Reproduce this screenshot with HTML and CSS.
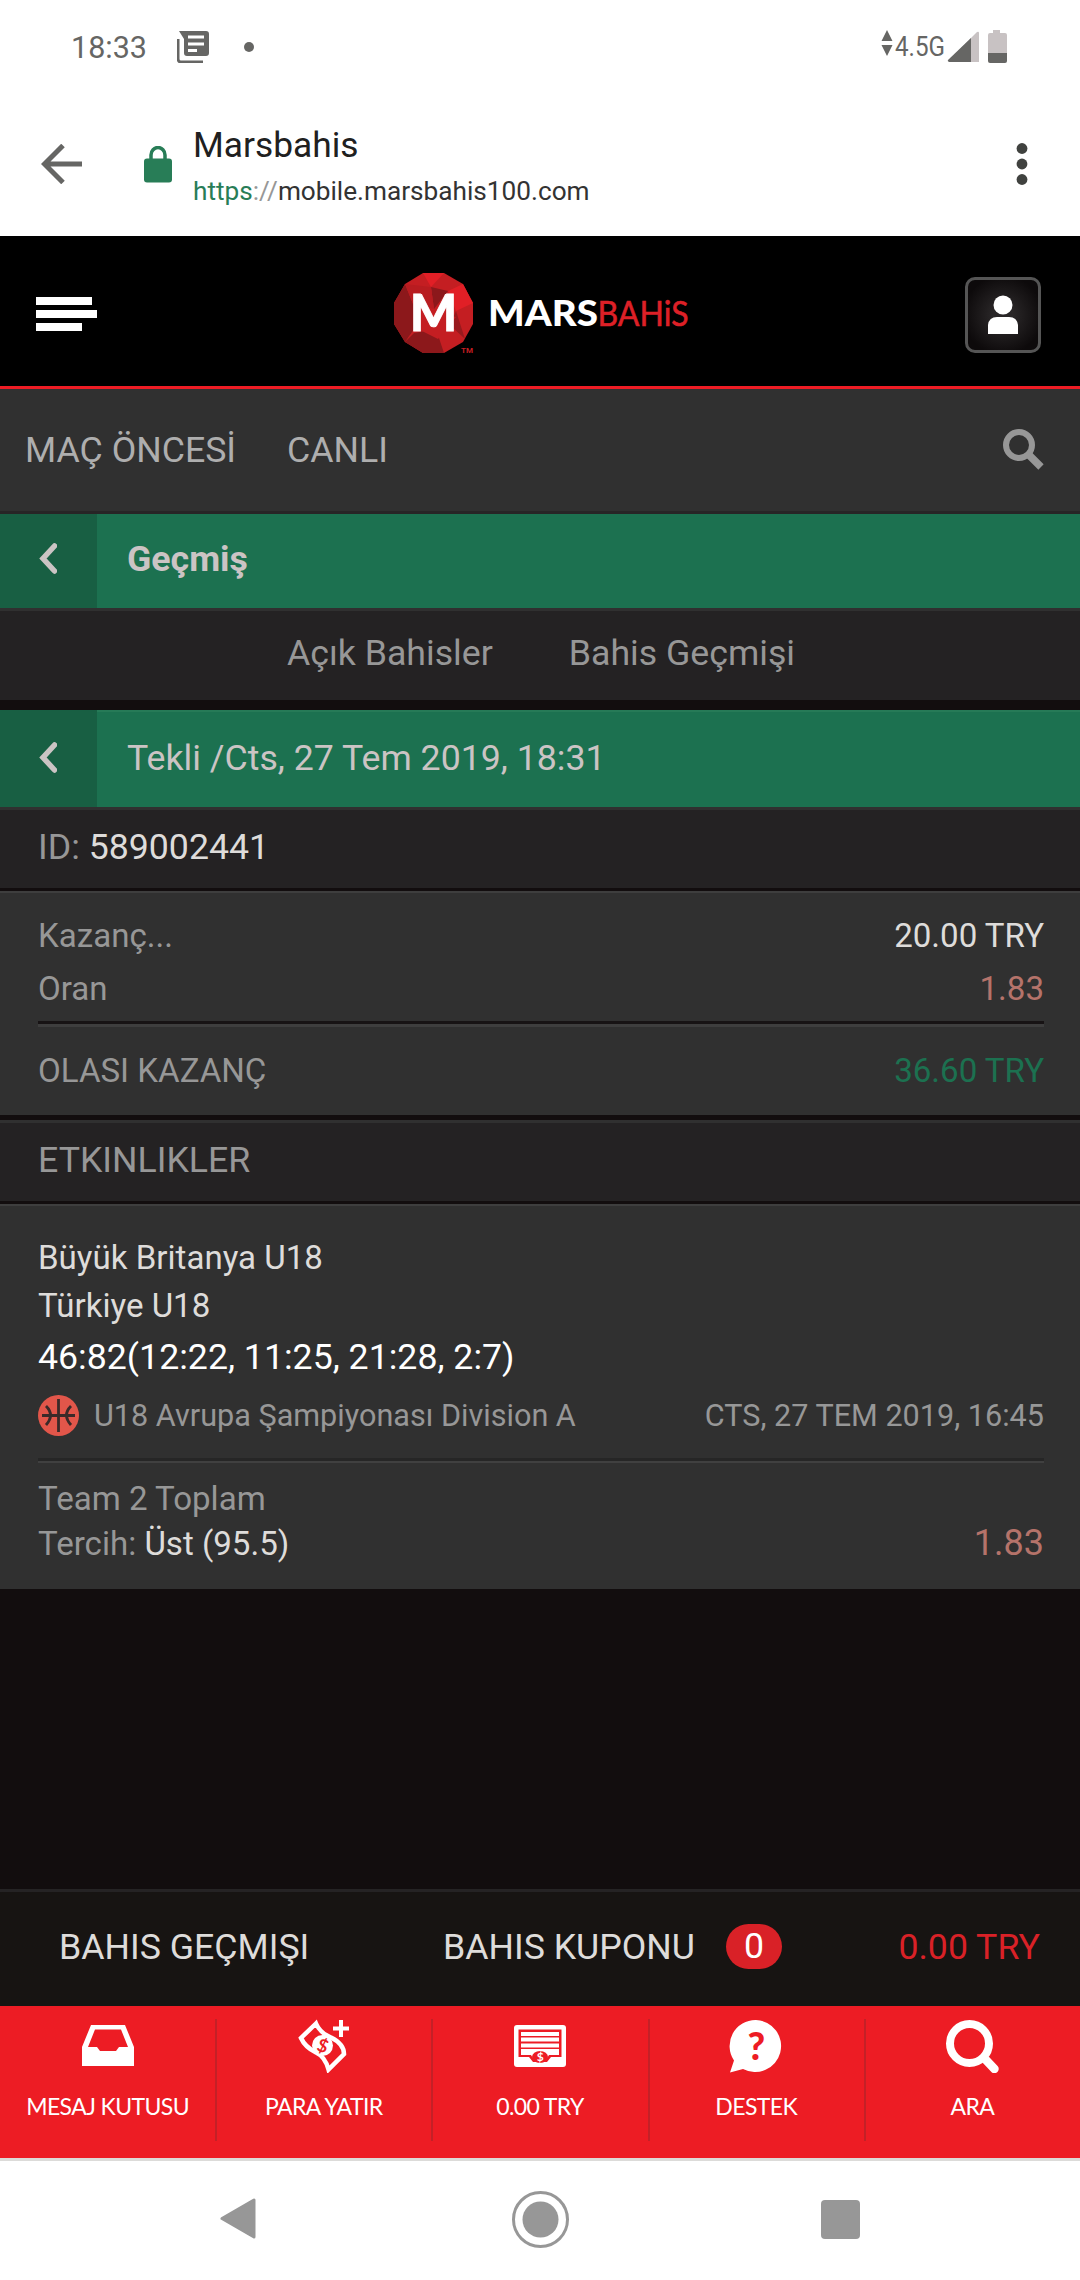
FILE: index.html
```html
<!DOCTYPE html>
<html lang="tr">
<head>
  <meta charset="UTF-8" />
  <meta name="viewport" content="width=device-width, initial-scale=1.0" />
  <title>Marsbahis</title>
  <link rel="stylesheet" href="styles.css">
</head>
<body>
  <div class="status-bar">
    <span class="clock">18:33</span>
    <svg class="news" width="32" height="32" viewBox="0 0 32 32">
      <path d="M1 8v20a3 3 0 0 0 3 3h22" fill="none" stroke="#666664" stroke-width="3"/>
      <path d="M2 0h27a3 3 0 0 1 3 3v19a3 3 0 0 1-3 3H10a3 3 0 0 1-3-3V8z" fill="#666664"/>
      <path d="M11 6h16M11 13h16M11 19.500h9" stroke="#fff" stroke-width="3"/>
    </svg>
    <span class="dot"></span>
    <svg class="signal" width="126" height="34" viewBox="0 0 126 34">
      <path d="M6 0l5.500 11H.5zM.5 15h11L6 26z" fill="#666664"/>
      <text x="14" y="25.500" font-size="27.500" textLength="50" lengthAdjust="spacingAndGlyphs" fill="#666664">4.5G</text>
      <path d="M68 32V30L96 2q2-1 2 1v29z" fill="#c8c2c3"/>
      <path d="M67 30L90 8v24H68q-2-1-1-2z" fill="#666664"/>
      <path d="M112 0h7v3h5q2 0 2 2v18h-19V5q0-2 2-2h3z" fill="#c8c2c3"/>
      <path d="M107 23h19v8q0 2-2 2h-15q-2 0-2-2z" fill="#666664"/>
    </svg>
  </div>

  <div class="browser-bar">
    <svg class="back" width="42" height="40" viewBox="0 0 42 40">
      <path d="M22 1.500L3.500 20 22 38.500M3 20h38" fill="none" stroke="#666664" stroke-width="5"/>
    </svg>
    <svg class="lock" width="28" height="37" viewBox="0 0 28 37">
      <path d="M7 14V9a7 7.500 0 0 1 14 0v5" fill="none" stroke="#287d57" stroke-width="3.500"/>
      <rect y="12.500" width="28" height="24" rx="3" fill="#287d57"/>
    </svg>
    <div class="address">
      <div class="page-title">Marsbahis</div>
      <div class="url"><span class="scheme">https</span><span class="slashes">://</span>mobile.marsbahis100.com</div>
    </div>
    <svg width="12" height="42" viewBox="0 0 12 42" fill="#40423f">
      <circle cx="6" cy="5.500" r="5.400"/><circle cx="6" cy="21" r="5.400"/><circle cx="6" cy="36.500" r="5.400"/>
    </svg>
  </div>

  <header class="site-header">
    <div class="burger"><i></i><i></i><i></i></div>
    <svg class="logo" width="304" height="82" viewBox="0 0 304 82">
      <path d="M29 0h21l19 11 10 19v21L69 69 50 80H29L11 69 0 51V30L11 11z" fill="#c41e22"/>
      <path d="M29 0h21L37 14z" fill="#e11f26"/>
      <path d="M69 11l10 19-17 8-8-20z" fill="#e11f26"/>
      <path d="M0 30L11 11l8 20 1 25-9 13L0 51z" fill="#8c181b"/>
      <path d="M37 14l17 4-14 18z" fill="#8c181b"/>
      <path d="M11 69l9-9 22-4 8 24H29z" fill="#8c181b"/>
      <path d="M11 11l26 3L40 36 19 31z" fill="#b81c20"/>
      <path d="M62 38l9 28-15-14z" fill="#981a1e"/>
      <path d="M28 58l16-18 18 4-18 22z" fill="#c41e22"/>
      <text class="mark" x="16" y="58" font-size="51" textLength="47" lengthAdjust="spacingAndGlyphs" fill="#fff" stroke="#fff">M</text>
      <text x="67" y="80" font-size="8" font-weight="700" textLength="12" lengthAdjust="spacingAndGlyphs" fill="#c41e22">TM</text>
      <text class="word bold" x="94" y="53" font-size="35.500" textLength="110" lengthAdjust="spacingAndGlyphs" fill="#fff">MARS</text>
      <text class="word" x="203.500" y="53" font-size="35.500" textLength="91" lengthAdjust="spacingAndGlyphs" fill="#dd2027" stroke="#dd2027" stroke-width=".6">BAHiS</text>
    </svg>
    <div class="user-btn">
      <svg width="32" height="40" viewBox="0 0 32 40" fill="#fff">
        <circle cx="16" cy="10" r="9.500"/>
        <path d="M1 39V30q1-8 9-8h12q8 0 9 8v9z"/>
      </svg>
    </div>
  </header>

  <nav class="tabs">
    <a>MAÇ ÖNCESİ</a>
    <a>CANLI</a>
    <svg width="42" height="42" viewBox="0 0 42 42" fill="none" stroke="#979797">
      <circle cx="17" cy="17" r="13" stroke-width="6"/>
      <path d="M26.500 26.500L39 39" stroke-width="7.500"/>
    </svg>
  </nav>

  <div class="title-bar">
    <div class="title-back"><svg width="18" height="31" viewBox="0 0 18 31"><path d="M15.500 3L4 15.500 15.500 28"/></svg></div>
    <div class="title-text strong">Geçmiş</div>
  </div>
  <div class="sub-tabs">
    <a>Açık Bahisler</a>
    <a>Bahis Geçmişi</a>
  </div>

  <div class="title-bar coupon">
    <div class="title-back"><svg width="18" height="31" viewBox="0 0 18 31"><path d="M15.500 3L4 15.500 15.500 28"/></svg></div>
    <div class="title-text">Tekli /Cts, 27 Tem 2019, 18:31</div>
  </div>
  <div class="coupon-id">ID:&nbsp;<b>589002441</b></div>

  <section class="summary">
    <div class="row"><span>Kazanç...</span><span class="light">20.00 TRY</span></div>
    <div class="row"><span>Oran</span><span class="odd">1.83</span></div>
    <div class="rule"></div>
    <div class="row total"><span>OLASI KAZANÇ</span><span class="win">36.60 TRY</span></div>
  </section>

  <div class="section-head">ETKINLIKLER</div>

  <section class="event">
    <div class="team">Büyük Britanya U18</div>
    <div class="team">Türkiye U18</div>
    <div class="score">46:82(12:22, 11:25, 21:28, 2:7)</div>
    <div class="league">
      <svg width="41" height="41" viewBox="0 0 41 41">
        <circle cx="20.500" cy="20.500" r="20.500" fill="#e2564a"/>
        <path d="M20.500 4v33M4 20.500h33M8 11q9 9 0 19M33 11q-9 9 0 19" fill="none" stroke="#3a2a29" stroke-width="2.800"/>
      </svg>
      <span class="league-name">U18 Avrupa Şampiyonası Division A</span>
      <span>CTS, 27 TEM 2019, 16:45</span>
    </div>
    <div class="rule soft"></div>
    <div class="pick">
      <div>
        <div class="pick-line">Team 2 Toplam</div>
        <div class="pick-line">Tercih: <span class="light">Üst (95.5)</span></div>
      </div>
      <span class="odd big">1.83</span>
    </div>
  </section>

  <div class="betslip">
    <span class="slip-history">BAHIS GEÇMIŞI</span>
    <span>BAHIS KUPONU</span>
    <span class="badge">0</span>
    <span class="balance">0.00 TRY</span>
  </div>

  <nav class="bottom-nav">
    <a>
      <svg width="54" height="54" viewBox="0 0 54 54">
        <path d="M10 6h34l9 22v19H1V28zM14 10.500L7 28h9l3 4h16l3-4h9l-7-17.500z" fill="#fff" fill-rule="evenodd"/>
      </svg>
      <span>MESAJ KUTUSU</span>
    </a>
    <a>
      <svg width="54" height="54" viewBox="0 0 54 54" fill="none" stroke="#fff">
        <path d="M19 4.500L4 19q4 9 15 14.500 9 4 12.500 17L47 35q0-10-13-16.500Q23 14 19 4.500z" stroke-width="4.500"/>
        <circle cx="25.500" cy="26.500" r="10.500" fill="#fff" stroke="none"/>
        <text x="25.500" y="33" font-size="18" font-weight="700" text-anchor="middle" fill="#ed1c24" stroke="none" transform="rotate(20 25.500 26.500)">$</text>
        <path d="M44 1v17M36 9.500h16" stroke-width="4"/>
      </svg>
      <span>PARA YATIR</span>
    </a>
    <a>
      <svg width="54" height="54" viewBox="0 0 54 54">
        <rect x="1" y="6" width="52" height="42" rx="3" fill="#fff"/>
        <path d="M5.500 10.500h43V38H38l-4 5H20l-4-5H5.500z" fill="#ed1c24"/>
        <path d="M8 15h38M8 20.500h38M8 26.500h38" stroke="#fff" stroke-width="4"/>
        <path d="M8 30h38v6H36l-3 5H21l-3-5H8z" fill="#fff"/>
        <ellipse cx="27" cy="38" rx="8" ry="6" fill="#ed1c24"/>
        <text x="27" y="42" font-size="12" font-weight="700" text-anchor="middle" fill="#fff">$</text>
      </svg>
      <span>0.00 TRY</span>
    </a>
    <a>
      <svg width="54" height="54" viewBox="0 0 54 54">
        <path d="M27 1a26 26 0 1 1-13 49L1 53.500l4-12A26 26 0 0 1 27 1z" fill="#fff"/>
        <text class="word bold" x="27" y="40.500" font-size="38" text-anchor="middle" fill="#ed1c24">?</text>
      </svg>
      <span>DESTEK</span>
    </a>
    <a>
      <svg width="54" height="54" viewBox="0 0 54 54" fill="none" stroke="#fff">
        <circle cx="24.500" cy="24.500" r="19.500" stroke-width="8"/>
        <path d="M41 41l8.500 9" stroke-width="8.500" stroke-linecap="round"/>
      </svg>
      <span>ARA</span>
    </a>
  </nav>

  <div class="android-nav">
    <svg width="40" height="42" viewBox="0 0 40 42"><path d="M35 2v37L3 20.500z" fill="#979797" stroke="#979797" stroke-width="3" stroke-linejoin="round"/></svg>
    <svg width="57" height="57" viewBox="0 0 57 57"><circle cx="28.500" cy="28.500" r="27" fill="none" stroke="#979797" stroke-width="3"/><circle cx="28.500" cy="28.500" r="18" fill="#979797"/></svg>
    <div class="recent"></div>
  </div>
</body>
</html>
```
FILE: styles.css
```css
* {
  box-sizing: border-box;
}
body {
  margin: 0;
  width: 1080px;
  height: 2280px;
  display: flex;
  flex-direction: column;
  font-family: Roboto, "Noto Sans", sans-serif;
  font-size: 35.7px;
  background: #120d0e;
  color: #979797;
}
svg {
  display: block;
  flex: none;
}

/* phone status bar */
.status-bar {
  height: 94px;
  padding: 0 73px 0 71px;
  display: flex;
  align-items: center;
  background: #fff;
  color: #666664;
  font-size: 30.5px;
}
.news {
  margin-left: 30px;
}
.dot {
  width: 10px;
  height: 10px;
  margin-left: 35px;
  border-radius: 50%;
  background: #666664;
}
.signal {
  margin-left: auto;
}

/* browser toolbar */
.browser-bar {
  height: 142px;
  padding: 0 52px 2px 41px;
  display: flex;
  align-items: center;
  background: #fff;
}
.lock {
  margin-left: 61px;
}
.address {
  flex: 1;
  margin-left: 21px;
  padding-top: 8px;
}
.page-title {
  font-size: 35.3px;
  line-height: 47px;
  color: #202020;
}
.url {
  font-size: 26.2px;
  line-height: 45px;
  color: #333;
}
.scheme {
  color: #287d57;
}
.slashes {
  color: #979797;
}

/* site header */
.site-header {
  height: 153px;
  padding: 5px 39px 0 36px;
  display: flex;
  align-items: center;
  justify-content: space-between;
  background: #000;
  border-bottom: 3px solid #ed1c24;
}
.burger {
  width: 76px;
  display: flex;
  flex-direction: column;
  gap: 5px;
}
.burger i {
  width: 56px;
  height: 8px;
  background: #fff;
}
.burger i:nth-child(2) {
  width: 61px;
}
.burger i:nth-child(3) {
  width: 46px;
}
.logo {
  margin-left: 15px;
}
.mark {
  font-family: Lato, sans-serif;
  font-weight: 900;
}
.word {
  font-family: Lato, sans-serif;
}
.word.bold {
  font-weight: 900;
}
.user-btn {
  width: 76px;
  height: 76px;
  margin-top: 3px;
  display: flex;
  align-items: center;
  justify-content: center;
  border: 3px solid #555;
  border-radius: 10px;
  background: radial-gradient(#292627 20%, #0d0a0b 80%);
}

.tabs {
  height: 125px;
  padding: 0 36px 4px 25px;
  display: flex;
  align-items: center;
  gap: 51px;
  background: #303030;
  box-shadow: inset 0 -3px #272526;
  color: #aeaeae;
}
.tabs svg {
  margin-left: auto;
  margin-bottom: 1px;
}

/* green headings */
.title-bar {
  height: 94px;
  display: flex;
  background: #1c7150;
  color: #cbc4c4;
}
.title-back {
  width: 97px;
  padding: 0 0 5px 39px;
  display: flex;
  align-items: center;
  background: #185f43;
}
.title-back path {
  fill: none;
  stroke: #cbc4c4;
  stroke-width: 5.5;
  stroke-linecap: round;
}
.title-text {
  padding: 0 0 5px 30px;
  display: flex;
  align-items: center;
}
.strong {
  font-weight: 700;
}
.coupon {
  height: 97px;
  margin-top: 10px;
  box-shadow: inset 0 2px #267a57;
}
.coupon .title-back {
  padding-bottom: 3px;
}
.coupon .title-text {
  padding-bottom: 1px;
}

.sub-tabs {
  height: 92px;
  padding: 0 0 5px 2px;
  display: flex;
  align-items: center;
  justify-content: center;
  gap: 76px;
  background: #242223;
  border-top: 3px solid #303030;
}
.coupon-id {
  height: 81px;
  padding: 0 0 5px 38px;
  display: flex;
  align-items: center;
  background: #242223;
  border-top: 3px solid #303030;
}
.coupon-id b {
  font-weight: 400;
  color: #dedcda;
}

.summary {
  height: 227px;
  padding: 18px 36px 0 38px;
  background: #303030;
  border-top: 3px solid #120d0e;
  box-shadow: inset 0 2px #3e3e3e;
  font-size: 33.1px;
}
.row {
  height: 53px;
  display: flex;
  align-items: center;
  justify-content: space-between;
}
.total {
  height: 86px;
}
.rule {
  height: 6px;
  margin-top: 6px;
  background: #171314;
  border-bottom: 3px solid #3e3e3e;
}
.light {
  color: #dedcda;
}
.odd {
  color: #b5736a;
}
.win {
  color: #1c7150;
}

.section-head {
  height: 84px;
  margin-top: 5px;
  padding: 0 0 5px 38px;
  display: flex;
  align-items: center;
  background: #242223;
  border-top: 3px solid #303030;
  border-bottom: 3px solid #120d0e;
}

/* event card */
.event {
  height: 385px;
  padding: 30px 36px 0 38px;
  background: #303030;
  box-shadow: inset 0 2px #3e3e3e;
  font-size: 33.1px;
}
.team {
  line-height: 48px;
  color: #dedcda;
}
.score {
  font-size: 35.7px;
  line-height: 54px;
  color: #fff;
}
.league {
  height: 63px;
  display: flex;
  align-items: center;
  font-size: 30.6px;
}
.league-name {
  flex: 1;
  margin-left: 15px;
}
.soft {
  height: 5px;
  margin-top: 11px;
  background: #262626;
  border-bottom: 2px solid #404040;
}
.pick {
  padding-top: 13px;
  display: flex;
  align-items: flex-end;
  justify-content: space-between;
}
.pick-line,
.big {
  line-height: 45px;
}
.big {
  font-size: 36px;
}

.betslip {
  height: 117px;
  margin-top: auto;
  padding: 0 40px 5px 59px;
  display: flex;
  align-items: center;
  background: #171412;
  border-top: 3px solid #252324;
  color: #dedcda;
}
.slip-history {
  width: 384px;
}
.badge {
  width: 56px;
  margin-left: 31px;
  border-radius: 23px;
  background: #d92127;
  color: #fff;
  line-height: 45px;
  text-align: center;
}
.balance {
  margin-left: auto;
  color: #d92127;
}

.bottom-nav {
  height: 152px;
  padding: 13px 0 17px;
  display: flex;
  background: #ed1c24;
}
.bottom-nav a {
  flex: 1;
  display: flex;
  flex-direction: column;
  align-items: center;
  gap: 18px;
  font-family: Lato, sans-serif;
  font-size: 23px;
  letter-spacing: -0.6px;
  line-height: 30px;
  color: #fff;
}
.bottom-nav a + a {
  box-shadow: inset 2px 0 #c42027;
  padding-left: 1px;
}

.android-nav {
  height: 122px;
  padding: 0 220px 3px 219px;
  display: flex;
  align-items: center;
  justify-content: space-between;
  background: #fff;
  border-top: 3px solid #dcdbd9;
}
.recent {
  width: 39px;
  height: 39px;
  border-radius: 4px;
  background: #979797;
}
```
